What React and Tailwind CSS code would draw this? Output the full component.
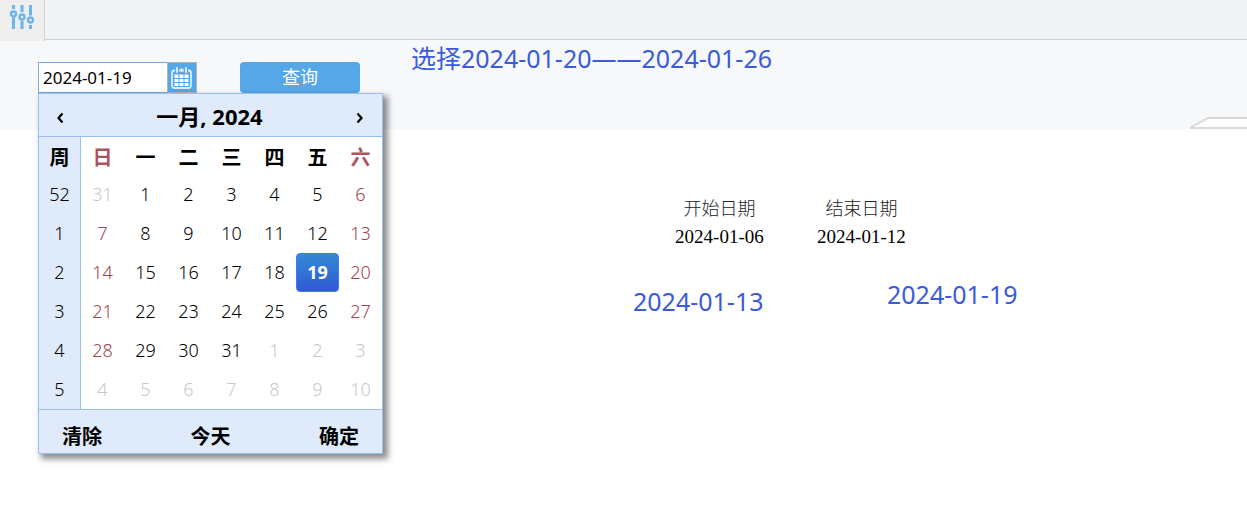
import React from 'react';

const weekdays = ['日', '一', '二', '三', '四', '五', '六'];
const weeks = [
  [52, [31, 1, 2, 3, 4, 5, 6]],
  [1, [7, 8, 9, 10, 11, 12, 13]],
  [2, [14, 15, 16, 17, 18, 19, 20]],
  [3, [21, 22, 23, 24, 25, 26, 27]],
  [4, [28, 29, 30, 31, 1, 2, 3]],
  [5, [4, 5, 6, 7, 8, 9, 10]],
];

function dayClass(row, col, day) {
  if ((row === 0 && day > 7) || (row > 3 && day < 15)) return 'pb-[2px] text-[#c8c8c8]';
  if (row === 2 && day === 19)
    return 'rounded border border-[#3b7cf0] bg-linear-to-b from-[#3489d3] to-[#3058d6] pb-[2px] font-bold text-white';
  if (col === 0 || col === 6) return 'pb-[2px] text-[#a04450]';
  return 'pb-[2px] text-black';
}

function SlidersIcon() {
  return (
    <svg width="26" height="26" viewBox="0 0 26 26" fill="none" stroke="#6bb4ec" aria-hidden="true">
      <path d="M4.500 1v4M4.500 13.500V25M13 1v7M13 17v8M21.500 1v10.500M21.500 21v4" strokeWidth="3" />
      <circle cx="4.500" cy="10" r="2.500" strokeWidth="2.400" />
      <circle cx="13" cy="13" r="2.500" strokeWidth="2.400" />
      <circle cx="21.500" cy="16" r="2.500" strokeWidth="2.400" />
    </svg>
  );
}

function CalendarIcon() {
  return (
    <svg width="22" height="22" viewBox="0 0 22 22" aria-hidden="true">
      <rect x="1" y="3.500" width="19" height="17.500" rx="2.500" fill="#55a7e8" stroke="#d9edfc" strokeWidth="1.800" />
      <path d="M6 1v4M15 1v4" stroke="#55a7e8" strokeWidth="4" />
      <path d="M6 1v4M10.500 2v2M15 1v4" stroke="#e6f3fd" strokeWidth="1.800" strokeLinecap="round" />
      <path d="M3.500 7.500h4v3.500h-4zM8.500 7.500h4v3.500h-4zM13.500 7.500h4v3.500h-4zM3.500 12h4v3h-4zM8.500 12h4v3h-4zM13.500 12h4v3h-4zM3.500 16h4v3h-4zM8.500 16h4v3h-4zM13.500 16h4v3h-4z" fill="#fff" />
    </svg>
  );
}

function Chevron({ d }) {
  return (
    <svg width="8" height="12" viewBox="0 0 8 12" fill="none" stroke="#000" strokeWidth="2.2" aria-hidden="true">
      <path d={d} />
    </svg>
  );
}

function DatePicker() {
  return (
    <div className="absolute left-0 top-full z-10 w-[345px] border border-[#9bbdf0] bg-white text-black shadow-[4px_4px_6px_1px_rgba(0,0,0,0.45)]">
      <div className="flex h-[43px] items-center justify-between border-b border-[#9bbdf0] bg-[#dfeafb] pt-[2px]">
        <button type="button" aria-label="上个月" className="flex h-full w-[42px] items-center justify-center pt-1">
          <Chevron d="M6.500 1.500 2.500 6 6.500 10.500" />
        </button>
        <span className="text-[22px] font-bold leading-8">一月, 2024</span>
        <button type="button" aria-label="下个月" className="flex h-full w-[44px] items-center justify-center pt-1">
          <Chevron d="M1.500 1.500 5.500 6 1.500 10.500" />
        </button>
      </div>
      <table className="w-full table-fixed border-separate border-spacing-0 text-center text-[18px] font-light">
        <thead>
          <tr className="h-[38px] text-[20px] leading-6">
            <th scope="col" className="w-[42px] border-r border-[#9bbdf0] bg-[#dfeafb] p-0 pt-[3px] font-bold">周</th>
            {weekdays.map((d, i) => (
              <th key={d} scope="col" className={`p-0 pt-[3px] font-bold ${i === 0 || i === 6 ? 'text-[#aa5560]' : 'text-black'}`}>
                {d}
              </th>
            ))}
          </tr>
        </thead>
        <tbody>
          {weeks.map(([week, days], row) => (
            <tr key={week} className="h-[39px] leading-6">
              <th scope="row" className="border-r border-[#9bbdf0] bg-[#dfeafb] p-0 pb-[2px] font-light">{week}</th>
              {days.map((day, col) => (
                <td key={col} className={`px-0 pt-0 ${dayClass(row, col, day)}`}>{day}</td>
              ))}
            </tr>
          ))}
        </tbody>
      </table>
      <div className="flex h-[44px] items-end justify-between border-t border-[#9bbdf0] bg-[#dfeafb] px-[23px] pb-1 text-[20px] font-bold leading-6">
        <button type="button">清除</button>
        <button type="button">今天</button>
        <button type="button">确定</button>
      </div>
    </div>
  );
}

export default function App() {
  return (
    <div className="relative min-h-screen bg-white font-['Noto_Sans','Noto_Sans_CJK_SC',sans-serif]">
      <header className="flex h-10 border-b border-[#d0d1d5] bg-[#f2f3f7]">
        <button type="button" aria-label="筛选" className="flex h-[41px] w-[45px] justify-center border-r border-[#d0d1d5] bg-[#eeeeee] pt-1">
          <SlidersIcon />
        </button>
      </header>

      <section className="flex h-[89px] items-end justify-between bg-[#f7f8fa]">
        <form className="flex self-start pl-[38px] pt-[22px]" onSubmit={(e) => e.preventDefault()}>
          <div className="relative flex h-[31px]">
            <input
              type="text"
              aria-label="日期"
              defaultValue="2024-01-19"
              className="w-[129px] border border-r-0 border-[#78a9dc] bg-white px-1 text-[17px] text-black outline-none"
            />
            <button type="button" aria-label="打开日历" className="flex w-[30px] items-center justify-center border border-[#b5b5b5] bg-[#55a7e8]">
              <CalendarIcon />
            </button>
            <DatePicker />
          </div>
          <button type="submit" className="ml-[43px] h-[31px] w-[120px] rounded bg-[#55a7e8] pb-[2px] text-[18px] leading-6 text-white">
            查询
          </button>
        </form>
        <svg width="57" height="12" viewBox="0 0 57 12" aria-hidden="true">
          <path d="M0 11.500 18 1H57V11.500Z" fill="#fff" />
          <path d="M0 11 18 1H57M0 11H57" fill="none" stroke="#d9d9d9" strokeWidth="2" />
        </svg>
      </section>

      <main className="pl-[52%] pt-[64px]">
        <table className="w-[284px] table-fixed text-center">
          <thead>
            <tr className="h-[30px] text-[18px] leading-7 text-[#222222]">
              <th scope="col" className="p-0 font-light">开始日期</th>
              <th scope="col" className="p-0 font-light">结束日期</th>
            </tr>
          </thead>
          <tbody>
            <tr className="h-[28px] font-['Liberation_Serif',serif] text-[19px] leading-7 text-black">
              <td className="p-0">2024-01-06</td>
              <td className="p-0">2024-01-12</td>
            </tr>
          </tbody>
        </table>
      </main>

      <p className="absolute left-[411px] top-[42px] whitespace-nowrap text-[25px] leading-8 text-[#3b5bd9]">选择2024-01-20——2024-01-26</p>
      <p className="absolute left-[633px] top-[285px] text-[25px] leading-8 text-[#3b5bd9]">2024-01-13</p>
      <p className="absolute left-[887px] top-[278px] text-[25px] leading-8 text-[#3b5bd9]">2024-01-19</p>
    </div>
  );
}
